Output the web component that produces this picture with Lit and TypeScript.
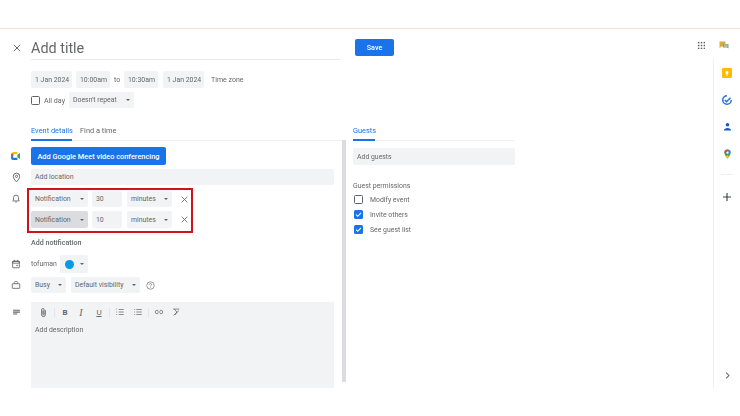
import { LitElement, html, css, svg } from "lit";
import { customElement } from "lit/decorators.js";

const caret = html`<svg class="caret" viewBox="0 0 6 3"><path d="M0 0h6L3 3z" fill="#5f6368"/></svg>`;
const x = (s: number, c = "#5f6368", w = 1.2) => html`<svg width=${s} height=${s} viewBox="0 0 10 10"><path d="M1 1l8 8M9 1l-8 8" stroke=${c} stroke-width=${w} fill="none"/></svg>`;
const ic = (p: unknown, s = 12) => html`<svg width=${s} height=${s} viewBox="0 0 24 24" fill="none" stroke="#5f6368" stroke-width="2">${p}</svg>`;

@customElement("app-root")
export class AppRoot extends LitElement {
  static styles = css`
    :host { display: block; width: 740px; height: 416px; overflow: hidden; background: #fff; color: #666769;
      font: 400 6.9px Roboto, "Liberation Sans", sans-serif; }
    .shot { filter: blur(0.3px); height: 416px; }
    .top { height: 28px; border-bottom: 1px solid #f5e2d2; }
    .page { display: flex; height: 387px; }
    .left { width: 342px; flex: none; }
    .scroll { width: 4px; height: 242px; margin-top: 111px; background: #dadce0; flex: none; }
    .center { width: 367px; flex: none; padding: 10px 0 0 7px; box-sizing: border-box; }
    .right { flex: 1; display: flex; flex-direction: column; min-width: 0; }

    .row { display: flex; align-items: center; }
    .gut { width: 31px; flex: none; display: flex; justify-content: center; padding-right: 0; padding-left: 1px; box-sizing: border-box; }
    .titleRow { height: 29px; margin-top: 2px; align-items: flex-start; }
    .titleRow .gut { padding: 13px 0 0 3px; }
    .title { width: 309px; height: 28px; border-bottom: 1px solid #e8eaed; font-size: 14.4px; line-height: 36px; }
    .chip { background: #f1f3f4; border-radius: 2px; display: flex; align-items: center; box-sizing: border-box; padding: 0 4px; white-space: nowrap; }
    .caret { width: 4px; height: 2px; margin-left: auto; flex: none; }
    .dates { margin: 11px 0 0 31px; height: 17px; }
    .dates .chip { height: 17px; }
    .d1 { width: 41px; }
    .d2 { width: 34px; margin-left: 4px; }
    .to { margin-left: 4px; width: 8px; }
    .d3 { width: 34px; margin-left: 2px; }
    .d4 { width: 41px; margin-left: 5px; }
    .tz { margin-left: 7px; font-size: 7px; }
    .checkbox { width: 9px; height: 9px; border: 1px solid #5f6368; border-radius: 1.5px; box-sizing: border-box; flex: none; }
    .checkbox.on { background: #1a73e8; border: none; display: flex; align-items: center; justify-content: center; }
    .allday { margin: 4px 0 0 31px; height: 16px; }
    .alllabel { margin-left: 4px; font-size: 7.1px; }
    .repeat { width: 65px; height: 16px; margin-left: 4px; }
    .tabs { margin: 14px 0 0 31px; height: 19px; border-bottom: 1px solid #eef0f1; display: flex; gap: 8px; width: 311px; box-sizing: border-box; }
    .tab { height: 19px; box-sizing: border-box; padding-top: 4px; font-size: 7.4px; white-space: nowrap; }
    .tab.on { color: #1a73e8; border-bottom: 2px solid #1a73e8; width: 41px; }
    .meet { margin-top: 6px; height: 18px; }
    .btn { background: #1a73e8; color: #fff; border-radius: 2px; height: 18px; display: flex; align-items: center; justify-content: center; font-weight: 500; white-space: nowrap; }
    .meet .btn { width: 135px; font-size: 7.4px; }
    .loc { margin-top: 4px; height: 16px; }
    .field { width: 303px; height: 16px; }
    .notif { margin-top: 3px; height: 45px; align-items: flex-start; }
    .bell { padding-top: 5px; }
    .red { border: 2px solid #d0121b; width: 166px; height: 45px; margin-left: -4px; box-sizing: border-box; padding: 1px 2px 0; display: flex; flex-direction: column; gap: 4px; }
    .nrow { display: flex; height: 16px; align-items: center; }
    .nrow + .nrow { height: 17px; }
    .nrow .chip { height: 100%; }
    .n1 { width: 57px; }
    .nrow .n1.act { background: #dadce0; }
    .n2 { width: 30px; margin-left: 4px; }
    .n3 { width: 45px; margin-left: 5px; }
    .nx { margin-left: 9px; display: flex; }
    .addn { height: 18px; margin-left: 31px; font-weight: 500; font-size: 7.1px; display: flex; align-items: center; }
    .cal { margin-top: 4px; height: 18px; }
    .cal .chip { width: 28px; height: 18px; margin-left: 3px; gap: 3px; padding-left: 5px; }
    .dot { width: 9px; height: 9px; border-radius: 50%; background: #039be5; flex: none; }
    .busy { margin-top: 4px; height: 16px; }
    .busy .chip { height: 16px; }
    .b1 { width: 35px; }
    .b2 { width: 69px; margin-left: 5px; }
    .help { margin-left: 6px; display: flex; }
    .desc { margin-top: 9px; align-items: flex-start; }
    .dgut { padding-top: 6px; }
    .descBox { width: 303px; height: 86px; background: #f1f3f4; }
    .tools { height: 20px; display: flex; align-items: center; padding-left: 6px; }
    .t { width: 10px; display: flex; justify-content: center; align-items: center; flex: none; font-size: 8px; }
    .clip { width: 12px; }
    .ti { font-family: "Liberation Serif", serif; font-size: 10px; margin-left: 6px; }
    .tu { margin-left: 8px; text-decoration: underline; }
    .sep { width: 1px; height: 9px; background: #e3e5e7; flex: none; margin: 0 5px; }
    .tl { margin-left: 8px; }
    .tc { margin-left: 7px; }
    .ph { padding: 4px 4px; }

    .saveRow { height: 17px; }
    .save { width: 39px; height: 17px; font-size: 7.2px; margin-left: 2px; }
    .gTabs { margin-top: 66px; width: 162px; height: 19px; border-bottom: 1px solid #eef0f1; box-sizing: border-box; }
    .gTabs .tab.on { width: 22px; }
    .guest { width: 162px; height: 17px; margin-top: 7px; }
    .gp { margin-top: 16px; height: 10px; display: flex; align-items: center; }
    .gi { display: flex; align-items: center; height: 15px; gap: 7px; margin-left: 1px; }
    .gi.first { margin-top: 1px; }

    .hd { height: 30px; display: flex; align-items: flex-start; padding-top: 12px; box-sizing: border-box; gap: 14px; margin-left: -16px; }
    .rail { height: 329px; border-left: 1px solid #f0f1f2; display: flex; flex-direction: column; align-items: center; box-sizing: border-box; width: 27px; }
    .rail .i { height: 27px; display: flex; align-items: center; justify-content: center; width: 100%; flex: none; }
    .rail hr { width: 12px; border: 0; border-top: 1px solid #eceef0; margin: 7px 0 14px; flex: none; }
    .plus { margin-top: 4px; }
    .chev { margin-top: auto; margin-bottom: 9px; display: flex; }
  `;

  render() {
    const dots = [2, 8.5, 15].flatMap((a) => [2, 8.5, 15].map((b) => svg`<rect x=${a} y=${b} width="3.4" height="3.4" fill="#5f6368"/>`));
    const check = html`<svg width="7" height="7" viewBox="0 0 10 10"><path d="M1.5 5.2l2.4 2.4 4.6-5" stroke="#fff" stroke-width="1.5" fill="none"/></svg>`;
    return html`
      <div class="shot">
      <div class="top"></div>
      <div class="page">
        <div class="left">
          <div class="row titleRow">
            <div class="gut">${x(8)}</div>
            <div class="title">Add title</div>
          </div>
          <div class="row dates">
            <div class="chip d1">1 Jan 2024</div>
            <div class="chip d2">10:00am</div>
            <span class="to">to</span>
            <div class="chip d3">10:30am</div>
            <div class="chip d4">1 Jan 2024</div>
            <span class="tz">Time zone</span>
          </div>
          <div class="row allday">
            <div class="checkbox"></div>
            <span class="alllabel">All day</span>
            <div class="chip repeat">Doesn't repeat ${caret}</div>
          </div>
          <div class="tabs"><div class="tab on">Event details</div><div class="tab">Find a time</div></div>
          <div class="row meet">
            <div class="gut"><svg width="10" height="8" viewBox="0 0 22 18">
              <path d="M0 4l4-4h10v5H5v4H0z" fill="#fbbc04"/><path d="M0 9h5v4h9v5H4a4 4 0 0 1-4-4z" fill="#1a73e8"/><path d="M5 5h9v8H5z" fill="#fff"/><path d="M14 5v8H0v1h14z" fill="#34a853"/><path d="M14 6l6-4v14l-6-4z" fill="#34a853"/><path d="M0 4h5v5H0z" fill="#ea4335"/></svg></div>
            <div class="btn">Add Google Meet video conferencing</div>
          </div>
          <div class="row loc">
            <div class="gut">${ic(svg`<path d="M12 2.500a7 7 0 0 0-7 7c0 5 7 12 7 12s7-7 7-12a7 7 0 0 0-7-7z"/><circle cx="12" cy="9.500" r="2.300"/>`, 11)}</div>
            <div class="chip field">Add location</div>
          </div>
          <div class="row notif">
            <div class="gut bell">${ic(svg`<path d="M6 17v-6a6 6 0 0 1 12 0v6l2 2H4z"/><path d="M10 21.500h4"/>`, 10)}</div>
            <div class="red">
              <div class="nrow"><div class="chip n1">Notification ${caret}</div><div class="chip n2">30</div><div class="chip n3">minutes ${caret}</div><div class="nx">${x(7)}</div></div>
              <div class="nrow"><div class="chip n1 act">Notification ${caret}</div><div class="chip n2">10</div><div class="chip n3">minutes ${caret}</div><div class="nx">${x(7)}</div></div>
            </div>
          </div>
          <div class="addn">Add notification</div>
          <div class="row cal">
            <div class="gut">${ic(svg`<path d="M5 5h14a1 1 0 0 1 1 1v14a1 1 0 0 1-1 1H5a1 1 0 0 1-1-1V6a1 1 0 0 1 1-1zM4 10h16V6H4z"/><path d="M8 2v3M16 2v3"/><rect x="13" y="14" width="3" height="3" fill="#5f6368" stroke="none"/>`, 10)}</div>
            <span>tofuman</span>
            <div class="chip"><span class="dot"></span>${caret}</div>
          </div>
          <div class="row busy">
            <div class="gut">${ic(svg`<path d="M4 9h16a1 1 0 0 1 1 1v9a1 1 0 0 1-1 1H4a1 1 0 0 1-1-1v-9a1 1 0 0 1 1-1zM8 9V6a2 2 0 0 1 2-2h4a2 2 0 0 1 2 2v3"/>`, 10)}</div>
            <div class="chip b1">Busy ${caret}</div>
            <div class="chip b2">Default visibility ${caret}</div>
            <span class="help">${ic(svg`<circle cx="12" cy="12" r="10" stroke-width="1.700"/><path d="M9 9.500a3 3 0 1 1 4.500 2.600c-1 .6-1.500 1.200-1.500 2.400" stroke-width="1.700"/><circle cx="12" cy="17.500" r="1" fill="#5f6368" stroke="none"/>`, 9)}</span>
          </div>
          <div class="row desc">
            <div class="gut dgut">${ic(svg`<path d="M3 6h18M3 11h18M3 16h11" stroke-width="3"/>`, 9)}</div>
            <div class="descBox">
              <div class="tools">
                <span class="t clip">${ic(svg`<path d="M16 7v10a4 4 0 0 1-8 0V6a2.600 2.600 0 0 1 5.200 0v10a1.200 1.200 0 0 1-2.400 0V8"/>`, 11)}</span>
                <span class="sep"></span>
                <b class="t">B</b>
                <i class="t ti">I</i>
                <span class="t tu">U</span>
                <span class="sep"></span>
                <span class="t">${ic(svg`<path d="M9 6h12M9 12h12M9 18h12M3 5h2M3 12h2M3 18h2" stroke-width="1.700"/>`, 10)}</span>
                <span class="t tl">${ic(svg`<path d="M8 6h13M8 12h13M8 18h13M3 6h2M3 12h2M3 18h2" stroke-width="1.700"/>`, 10)}</span>
                <span class="sep"></span>
                <span class="t">${ic(svg`<path d="M10 8H7a4 4 0 0 0 0 8h3M14 8h3a4 4 0 0 1 0 8h-3M8 12h8" stroke-width="1.700"/>`, 10)}</span>
                <span class="t tc">${ic(svg`<path d="M5 5h15M8 5l6 7-4 7M6 20l13-11" stroke-width="1.800"/>`, 10)}</span>
              </div>
              <div class="ph">Add description</div>
            </div>
          </div>
        </div>
        <div class="scroll"></div>
        <div class="center">
          <div class="saveRow"><div class="btn save">Save</div></div>
          <div class="gTabs"><div class="tab on">Guests</div></div>
          <div class="chip guest">Add guests</div>
          <div class="gp">Guest permissions</div>
          <div class="gi first"><span class="checkbox"></span><span>Modify event</span></div>
          <div class="gi"><span class="checkbox on">${check}</span><span>Invite others</span></div>
          <div class="gi"><span class="checkbox on">${check}</span><span>See guest list</span></div>
        </div>
        <div class="right">
          <div class="hd">
            <svg width="8" height="8" viewBox="0 0 18 18">${dots}</svg>
            <svg width="10" height="9" viewBox="0 0 20 18"><path d="M1 1h12v10H5l-4 3z" fill="#d9a93a"/><path d="M8 6h11v9l-3-2H8z" fill="#8a9a7b"/><path d="M10 8h7M10 10.500h7" stroke="#fff"/></svg>
          </div>
          <div class="rail">
            <div class="i"><svg width="10" height="10" viewBox="0 0 20 20"><rect width="20" height="20" rx="2" fill="#fbbc04"/><path d="M7 9a3 3 0 1 1 6 0c0 1.500-1 2-1 3H8c0-1-1-1.500-1-3zM8 13h4v2H8z" fill="#fff"/></svg></div>
            <div class="i"><svg width="10" height="10" viewBox="0 0 20 20"><path d="M10 1.500a8.500 8.500 0 1 0 8.500 8.500" fill="none" stroke="#2a6fe0" stroke-width="3"/><path d="M5.500 10l3.500 3.500 8-8" fill="none" stroke="#2a6fe0" stroke-width="3"/></svg></div>
            <div class="i"><svg width="9" height="10" viewBox="0 0 20 20"><circle cx="10" cy="5" r="4" fill="#1a57c8"/><path d="M2 18c0-4 4-6 8-6s8 2 8 6z" fill="#1a57c8"/></svg></div>
            <div class="i"><svg width="9" height="10" viewBox="0 0 20 22"><path d="M10 1a7 7 0 0 0-7 7c0 5 7 13 7 13s7-8 7-13a7 7 0 0 0-7-7z" fill="#34a853"/><path d="M10 1a7 7 0 0 1 7 7l-7 2z" fill="#4285f4"/><path d="M3 8a7 7 0 0 1 7-7l0 6z" fill="#ea4335"/><path d="M10 13l-4 3 4 5 3-5z" fill="#fbbc04"/><circle cx="10" cy="8" r="2.500" fill="#fff"/></svg></div>
            <hr />
            <svg class="plus" width="8" height="8" viewBox="0 0 10 10"><path d="M5 0v10M0 5h10" stroke="#3c4043" stroke-width="1.400"/></svg>
            <div class="chev"><svg width="5" height="7" viewBox="0 0 6 10"><path d="M1 1l4 4-4 4" fill="none" stroke="#5f6368" stroke-width="1.500"/></svg></div>
          </div>
        </div>
      </div>
      </div>
    `;
  }
}
